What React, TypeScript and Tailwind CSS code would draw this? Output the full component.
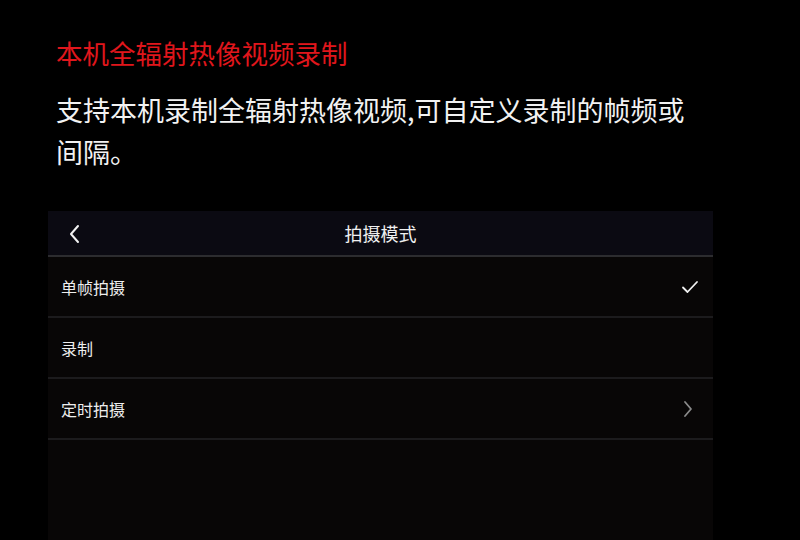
import React from 'react';

const rows = [
  { label: '单帧拍摄', right: 'check' },
  { label: '录制', right: null },
  { label: '定时拍摄', right: 'chevron' },
];

function BackIcon() {
  return (
    <svg width="12" height="20" viewBox="0 0 12 20" fill="none">
      <path d="M10 2 L3 10 L10 18" stroke="#f2f2f2" strokeWidth="2" strokeLinecap="round" strokeLinejoin="round" />
    </svg>
  );
}

function CheckIcon() {
  return (
    <svg width="18" height="14" viewBox="0 0 18 14" fill="none">
      <path d="M2 7.5 L6.5 12 L16 2" stroke="#f0f0f0" strokeWidth="1.8" strokeLinecap="round" strokeLinejoin="round" />
    </svg>
  );
}

function ChevronIcon() {
  return (
    <svg width="10" height="18" viewBox="0 0 10 18" fill="none">
      <path d="M2 2 L8 9 L2 16" stroke="#8a8a8a" strokeWidth="1.8" strokeLinecap="round" strokeLinejoin="round" />
    </svg>
  );
}

export default function App() {
  return (
    <div
      className="w-[800px] h-[540px] bg-black overflow-hidden flex flex-col"
      style={{ fontFamily: '"Noto Sans CJK SC", "Noto Sans", sans-serif' }}
    >
      <div className="pl-[56px] pt-[36px]">
        <h1 className="text-[26.5px] leading-[34px] text-[#e0161c] font-normal">本机全辐射热像视频录制</h1>
        <p className="mt-[19px] w-[645px] text-[27px] leading-[42px] text-[#f2f2f2]">
          支持本机录制全辐射热像视频,可自定义录制的帧频或间隔。
        </p>
      </div>

      <div className="ml-[48px] mt-[38px] w-[665px] flex-1 bg-[#080606] flex flex-col">
        {/* Header */}
        <div className="relative h-[46px] bg-[#0b0a12] flex items-center justify-center border-b-2 border-[#2c2c2f]">
          <div className="absolute left-[20px] top-[13px]">
            <BackIcon />
          </div>
          <span className="text-[18px] text-[#f0f0f0]">拍摄模式</span>
        </div>

        {rows.map((r) => (
          <div
            key={r.label}
            className="h-[61px] flex items-center justify-between pl-[13px] pr-[14px] border-b-2 border-[#1c1b1d]"
          >
            <span className="text-[16px] text-[#ededed]">{r.label}</span>
            {r.right === 'check' && <CheckIcon />}
            {r.right === 'chevron' && (
              <div className="pr-[6px]">
                <ChevronIcon />
              </div>
            )}
          </div>
        ))}
      </div>
    </div>
  );
}
